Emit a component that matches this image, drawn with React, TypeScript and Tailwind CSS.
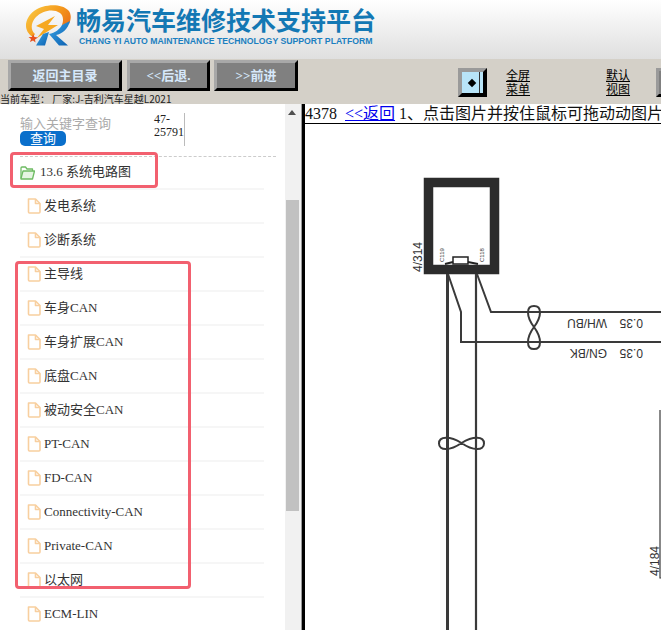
import React from "react";

const items = ["发电系统","诊断系统","主导线","车身CAN","车身扩展CAN","底盘CAN","被动安全CAN","PT-CAN","FD-CAN","Connectivity-CAN","Private-CAN","以太网","ECM-LIN"];

function Logo() {
  return (
    <svg width="50" height="48" viewBox="24 2 50 48" className="shrink-0">
      <defs>
        <linearGradient id="sw" x1="0" y1="0" x2="1" y2="0.6">
          <stop offset="0" stopColor="#f9d04a" />
          <stop offset="0.6" stopColor="#f59a1c" />
          <stop offset="1" stopColor="#e8701a" />
        </linearGradient>
        <linearGradient id="rb" x1="0" y1="0" x2="1" y2="1">
          <stop offset="0" stopColor="#3aa5e6" />
          <stop offset="1" stopColor="#0b5fb0" />
        </linearGradient>
      </defs>
      <path d="M33 36C23 30 24 18 34 10C43 3 61 2 68 9C72 13 71 19 69 23L62 24C64 19 63 14 60 12C53 7 42 10 36 16C31 21 30 29 35 33Z" fill="url(#sw)" />
      <path d="M36 25L55 15L48 24L58 24L37 37L44 28Z" fill="#f6a821" />
      <path d="M33 33L34.5 36L38 36.5L35 38.5L35.5 41.5L33 39.5L30 41L31 38L28.5 36L32 36Z" fill="#e8501e" />
      <path d="M43 33L49 31L45 44.5L36 44.5Z" fill="url(#rb)" />
      <path d="M70 20C68 28 62 33 56 34L68 44.5L59 44.5L49 33C55 32 60 28 62 24Z" fill="url(#rb)" />
    </svg>
  );
}

function Schematic() {
  return (
    <svg viewBox="305 124 356 506" className="block w-[356px] h-[506px]">
      <rect x="428.5" y="182.5" width="66" height="87" fill="#fff" stroke="#2c2c2c" strokeWidth="9.5" />
      <rect x="453" y="257" width="15" height="7" fill="#fff" stroke="#222" strokeWidth="1.5" />
      <path d="M445 264L453 262M468 262L478 264" stroke="#222" strokeWidth="2" fill="none" />
      <g fill="none" stroke="#3a3a3a">
        <path d="M447.5 274V630" strokeWidth="3" />
        <path d="M476 274V630" strokeWidth="2.2" />
        <path d="M448 274L461 312V342H661" strokeWidth="2" />
        <path d="M477 274L491 312H661" strokeWidth="2" />
        <path d="M534 327C526 316 526 306 534 306C542 306 542 316 534 327C526 338 526 349 534 349C542 349 542 338 534 327Z" strokeWidth="2" />
        <path d="M461.5 443C450 436 439 436 439 443.5C439 451 450 451 461.5 443C473 436 484 436 484 443.5C484 451 473 451 461.5 443Z" strokeWidth="2" />
        <path d="M660 410V578H661" strokeWidth="1.2" />
      </g>
      <g fontFamily="'Liberation Sans',sans-serif" fill="#333">
        <text transform="translate(422,272) rotate(-90)" fontSize="12">4/314</text>
        <text transform="translate(443.5,262) rotate(-90)" fontSize="6">C119</text>
        <text transform="translate(483.5,262) rotate(-90)" fontSize="6">C118</text>
        <text transform="translate(607,319) rotate(180)" fontSize="12">WH/BU</text>
        <text transform="translate(643,319) rotate(180)" fontSize="12">0.35</text>
        <text transform="translate(607,349) rotate(180)" fontSize="12">GN/BK</text>
        <text transform="translate(643,349) rotate(180)" fontSize="12">0.35</text>
        <text transform="translate(659,576) rotate(-90)" fontSize="12">4/184</text>
      </g>
    </svg>
  );
}

function FileIcon() {
  return (
    <svg width="14" height="16" viewBox="0 0 14 16" className="shrink-0" fill="none" stroke="#f8cf9f" strokeWidth="1.6" strokeLinejoin="round">
      <path d="M1.5 1H8.5L13 5.5V14A1 1 0 0 1 12 15H2.5A1 1 0 0 1 1.5 14Z" />
      <path d="M8.5 1V5.5H13" />
    </svg>
  );
}

function NavBtn({ w, children }: { w: string; children: React.ReactNode }) {
  return (
    <div className={`${w} shrink-0 h-[31px] flex items-center justify-center bg-[#808080] border-[3px] border-t-[#a8a8a8] border-l-[#a8a8a8] border-b-black border-r-black text-[#d6e8fb] text-[13px] font-bold`}>
      {children}
    </div>
  );
}

function TwoLine({ a, b, cls }: { a: string; b: string; cls: string }) {
  return (
    <div className={`${cls} shrink-0 mt-[8px] text-[12px] leading-[14px] underline text-black font-['Noto_Sans_CJK_SC',sans-serif]`}>
      <div>{a}</div>
      <div>{b}</div>
    </div>
  );
}

export default function App() {
  return (
    <div className="w-[661px] h-[630px] overflow-hidden bg-white relative font-['Liberation_Serif','Noto_Sans_CJK_SC',serif]">
      <header className="h-[59px] bg-gradient-to-b from-[#ffffff] to-[#dfdfdf] flex pl-[24px] pt-[3px]">
        <Logo />
        <div className="ml-[2px] pt-[1px]">
          <div className="text-[25px] leading-[30px] font-bold text-[#1378b4] whitespace-nowrap font-['Noto_Sans_CJK_SC',sans-serif]">畅易汽车维修技术支持平台</div>
          <div className="text-[8.7px] leading-[12px] mt-[1px] ml-[3px] font-bold text-[#1b7fc0] whitespace-nowrap font-['Liberation_Sans',sans-serif]">CHANG YI AUTO MAINTENANCE TECHNOLOGY SUPPORT PLATFORM</div>
        </div>
      </header>

      <div className="bg-[#d4d0c8] h-[45px] relative">
        <div className="flex pl-[8px] pt-[1px]">
          <NavBtn w="w-[114px]">返回主目录</NavBtn>
          <NavBtn w="w-[83px] ml-[5px]">&lt;&lt;后退.</NavBtn>
          <NavBtn w="w-[84px] ml-[4px]">&gt;&gt;前进</NavBtn>
          <div className="shrink-0 ml-[160px] mt-[8px] w-[29px] h-[29px] bg-[#b8e4f8] border-[4px] border-t-[#9a9a9a] border-l-[#9a9a9a] border-b-black border-r-black flex items-center justify-center relative">
            <span className="w-[6px] h-[6px] bg-black rotate-45 -ml-[2px]" />
            <span className="absolute right-[3px] top-0 bottom-0 w-[1px] bg-[#333]" />
          </div>
          <TwoLine a="全屏" b="菜单" cls="ml-[19px]" />
          <TwoLine a="默认" b="视图" cls="ml-[76px]" />
          <div className="ml-[26px] mt-[8px] w-[29px] h-[29px] shrink-0 bg-[#808080] border-[3px] border-t-[#9a9a9a] border-l-[#9a9a9a] border-b-black" />
        </div>
        <div className="absolute left-0 top-[34px] text-[10px] leading-[11px] text-[#222] whitespace-nowrap font-['Noto_Sans_CJK_SC',sans-serif]">当前车型： 厂家:J-吉利汽车星越L2021</div>
      </div>

      <div className="flex h-[526px]">
        <aside className="w-[285px] shrink-0 overflow-hidden">
          <div className="h-[52px] pl-[20px] flex relative">
            <div className="w-[134px] pt-[12px]">
              <div className="text-[13px] leading-[16px] text-[#aaa]">输入关键字查询</div>
              <div className="w-[46px] h-[15px] -mt-[1px] rounded-[5px] bg-[#0a6fcb] text-white text-[13px] leading-[15px] text-center">查询</div>
            </div>
            <div className="w-[31px] h-[33px] mt-[9px] border-r border-[#bbb] text-[12px] leading-[13px] text-[#222] whitespace-pre-line">{"47-\n25791"}</div>
          </div>
          <div className="ml-[20px] w-[256px] border-t border-dashed border-[#ccc]" />
          <div className="ml-[20px] w-[244px] h-[33px] border-b-2 border-[#f6f6f6] flex items-center gap-[5px]">
            <svg width="15" height="14" viewBox="0 0 15 14" fill="none" stroke="#6dbb62" strokeWidth="1.3" strokeLinejoin="round" className="shrink-0">
              <path d="M1 12.5V2A1 1 0 0 1 2 1H5.5L7 3H12.5V5" />
              <path d="M1 12.5L3 5H14.5L12.5 13H1Z" fill="#e6f5e2" />
            </svg>
            <span className="text-[13px] text-[#333] whitespace-nowrap -translate-y-[1px]">13.6 系统电路图</span>
          </div>
          {items.map((t) => (
            <div key={t} className="ml-[20px] w-[244px] h-[34px] border-b-2 border-[#f6f6f6] flex items-center pl-[7px] gap-[3px]">
              <FileIcon />
              <span className="text-[13px] text-[#333] whitespace-nowrap">{t}</span>
            </div>
          ))}
        </aside>

        <div className="w-[16px] shrink-0 bg-[#f1f1f1] flex flex-col items-start pl-[1px]">
          <div className="mt-[6px] ml-[2px] w-0 h-0 border-l-[4px] border-r-[4px] border-b-[5px] border-l-transparent border-r-transparent border-b-[#505050]" />
          <div className="mt-[85px] w-[13px] h-[311px] bg-[#c1c1c1]" />
        </div>

        <div className="w-[1px] shrink-0 bg-[#999]" />
        <div className="w-[3px] shrink-0 bg-black" />

        <main className="flex-1 min-w-0">
          <div className="h-[20px] border-b border-black text-[16px] leading-[19px] text-[#111] whitespace-nowrap overflow-hidden">
            4378 <a className="ml-[4px] text-[#0000ee] underline">&lt;&lt;返回</a> 1、点击图片并按住鼠标可拖动动图片
          </div>
          <Schematic />
        </main>
      </div>

      <div className="absolute left-[10px] top-[152px] w-[148px] h-[36px] border-[3px] border-[#f2606f] rounded-[4px]" />
      <div className="absolute left-[15px] top-[261px] w-[176px] h-[328px] border-[3px] border-[#f2606f] rounded-[4px]" />
    </div>
  );
}
